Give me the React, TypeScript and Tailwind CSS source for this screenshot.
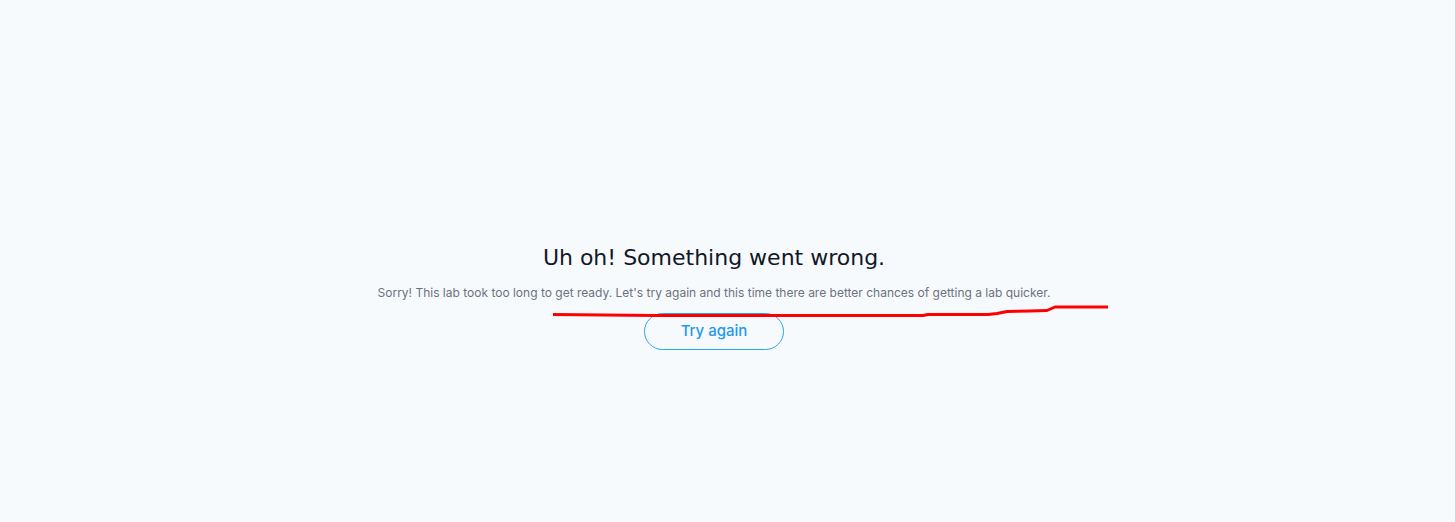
import React from 'react';

// Page d'erreur quand le lab ne démarre pas à temps
const App: React.FC = () => {
  return (
    <div className="relative min-h-[522px] bg-[#f7fafd] font-['Inter',sans-serif]">
      <div className="flex flex-col items-center pt-[242px] mr-[27px]">
        <h1 className="text-[22px] leading-[32px] font-['DejaVu_Sans',sans-serif] text-[#111827]">
          Uh oh! Something went wrong.
        </h1>
        <p className="mt-[10px] text-[12px] leading-[17px] text-[#6b7280]">
          Sorry! This lab took too long to get ready. Let's try again and this time there are better chances of getting a lab quicker.
        </p>
        <button
          type="button"
          className="mt-[12px] w-[140px] h-[37px] rounded-full border border-[#2aa4ef] text-[#2199ef] text-[15px] font-medium"
        >
          Try again
        </button>
      </div>

      {/* trait rouge dessiné à la main par-dessus la capture */}
      <svg
        className="absolute inset-0 pointer-events-none"
        width="1455"
        height="522"
        viewBox="0 0 1455 522"
      >
        <polyline
          points="553,314.5 655,315.5 923,315.5 928,314.5 988,314.5 997,313.5 1007,311.5 1030,311 1047,310.5 1055,307 1108,307"
          fill="none"
          stroke="#ff0000"
          strokeWidth="3"
          strokeLinejoin="round"
        />
      </svg>
    </div>
  );
};

export default App;
